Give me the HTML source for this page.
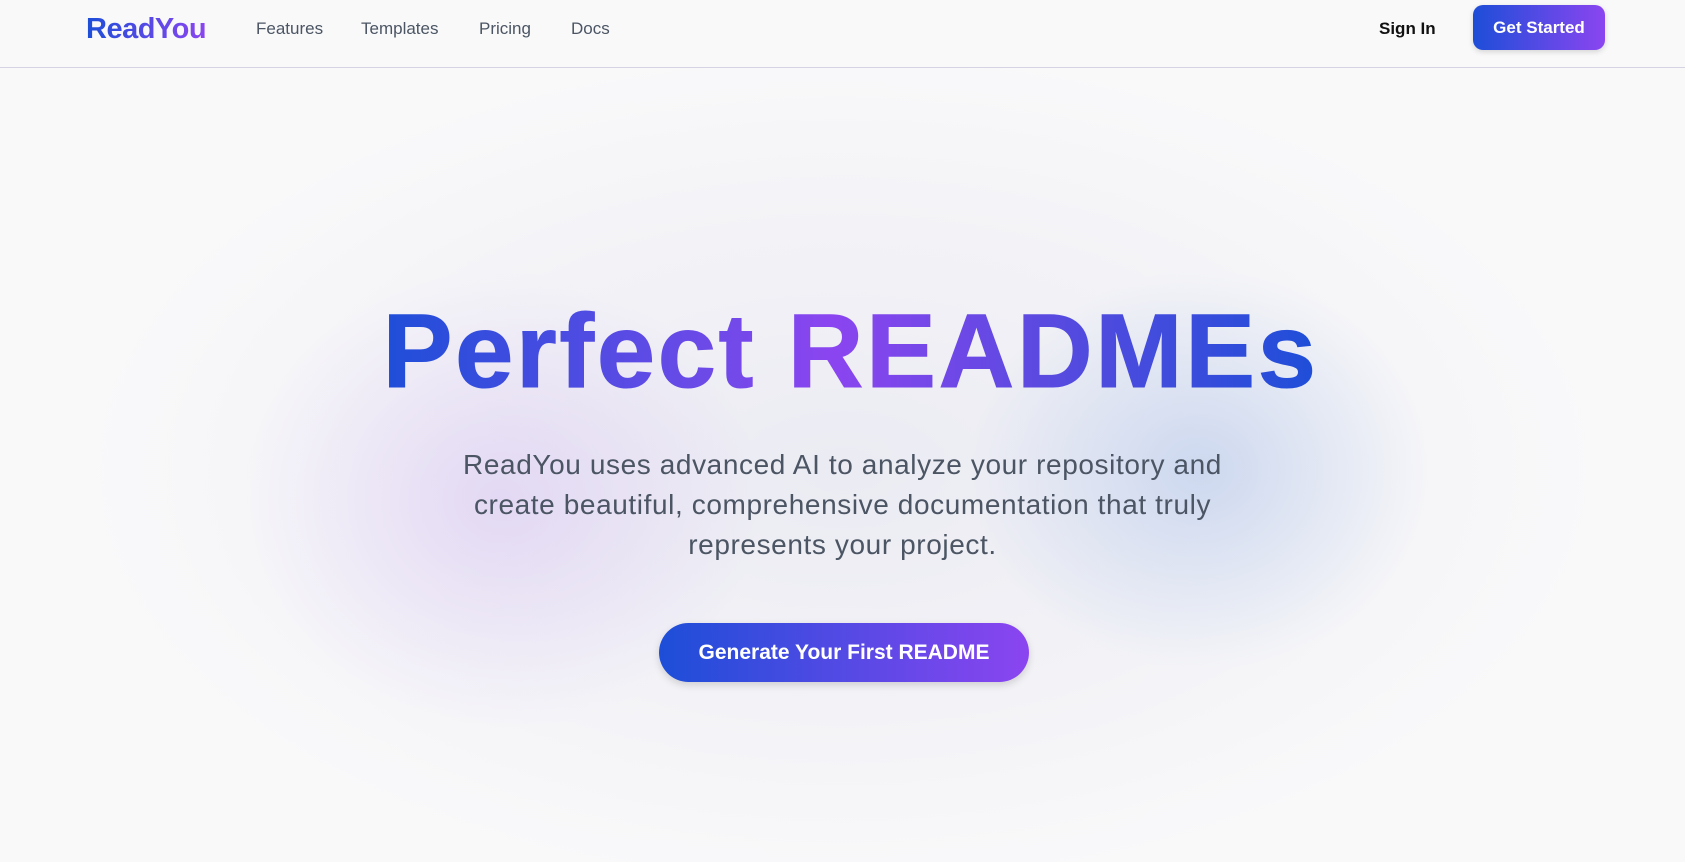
<!DOCTYPE html>
<html><head><meta charset="utf-8"><style>
*{margin:0;padding:0;box-sizing:border-box}
html,body{width:1685px;height:862px;overflow:hidden;background:#f9f9fa;font-family:"Liberation Sans",sans-serif}
.bg{position:absolute;inset:0;
background:
radial-gradient(ellipse 260px 230px at 500px 500px, rgba(200,170,240,.35), rgba(200,170,240,0) 100%),
radial-gradient(ellipse 230px 200px at 1200px 470px, rgba(160,185,230,.45), rgba(160,185,230,0) 100%),
radial-gradient(ellipse 760px 420px at 843px 470px, rgba(225,225,238,.6), rgba(249,249,250,0) 100%);}
nav{position:absolute;left:0;top:0;width:1685px;height:68px;border-bottom:1px solid #d4d4e4;background:#f9f9fa}
.logo{position:absolute;left:86px;top:13px;font-size:29px;font-weight:bold;letter-spacing:-0.5px;background:linear-gradient(90deg,#1d4ed8,#8b45f0);-webkit-background-clip:text;color:transparent}
.links a{position:absolute;top:19px;font-size:17px;color:#4b5563;text-decoration:none}
.signin{position:absolute;left:1379px;top:19px;font-size:17px;font-weight:bold;color:#111}
.gs{position:absolute;left:1473px;top:5px;width:132px;height:45px;border-radius:10px;background:linear-gradient(90deg,#1d4ed8,#8b45f0);color:#fff;font-weight:bold;font-size:17px;line-height:45px;text-align:center;box-shadow:0 2px 6px rgba(0,0,0,.15)}
h1{position:absolute;left:8px;width:1685px;top:287px;text-align:center;font-size:105px;font-weight:bold;letter-spacing:2.5px;line-height:130px}
h1 span{background:linear-gradient(90deg,#1d4ed8 0%,#6d4ae8 35%,#8b45f0 48%,#5b4ae0 70%,#1d4ed8 100%);-webkit-background-clip:text;color:transparent;padding:0 4px;-webkit-text-stroke:1px transparent}
p{position:absolute;left:0;width:1685px;top:445px;text-align:center;font-size:28px;line-height:40px;color:#4b5563;letter-spacing:0.6px}
.cta{position:absolute;left:659px;top:623px;width:370px;height:59px;border-radius:30px;background:linear-gradient(90deg,#1d4ed8,#8b45f0);color:#fff;font-weight:bold;font-size:21px;line-height:59px;text-align:center;box-shadow:0 3px 8px rgba(0,0,0,.15)}
</style></head><body>
<div class="bg"></div>
<nav>
<div class="logo">ReadYou</div>
<div class="links"><a style="left:256px">Features</a><a style="left:361px">Templates</a><a style="left:479px">Pricing</a><a style="left:571px">Docs</a></div>
<div class="signin">Sign In</div>
<div class="gs">Get Started</div>
</nav>
<h1><span>Perfect READMEs</span></h1>
<p>ReadYou uses advanced AI to analyze your repository and<br>create beautiful, comprehensive documentation that truly<br>represents your project.</p>
<div class="cta">Generate Your First README</div>
</body></html>
